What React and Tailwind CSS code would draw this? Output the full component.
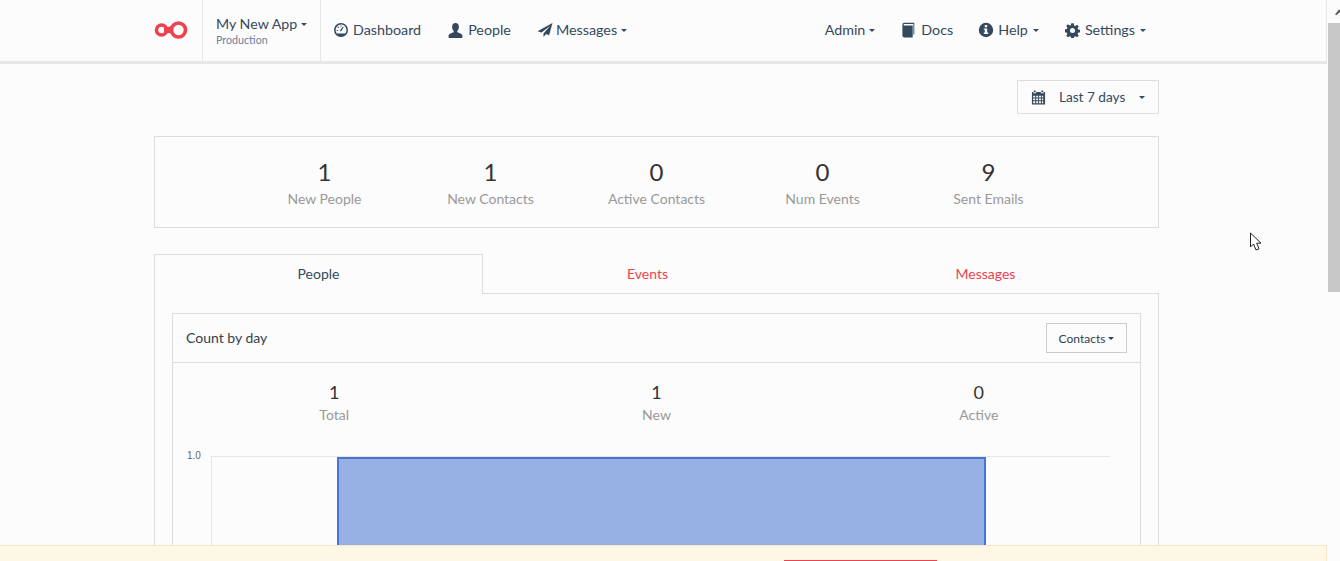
import React from "react";

const Caret = ({ className = "" }) => (
  <span className={"inline-block w-0 h-0 border-x-[3px] border-x-transparent border-t-[3px] border-t-current align-middle " + className} />
);

const I = ({ children, w = 16, vb = "0 0 16 16", className = "" }) => (
  <svg width={w} height={w} viewBox={vb} className={"shrink-0 " + className} fill="currentColor">{children}</svg>
);

const Gauge = () => (
  <I w={16}>
    <path fillRule="evenodd" d="M8 1a7 7 0 1 1 0 14A7 7 0 0 1 8 1zm0 1.600a5.400 5.400 0 0 0-5.400 5.400c0 1.300.5 2.500 1.200 3.400h8.400A5.400 5.400 0 0 0 8 2.600z" />
    <path d="M7 8.200 10 4.600l.7.500-2.300 3.900a1 1 0 0 1-1.400-.8zM7.500 3.500h1v1.200h-1zM4.400 5.400l.8-.8.8.8-.8.8zM3.600 8h1.300v1H3.600z" />
  </I>
);
const User = () => (
  <I w={17}>
    <path d="M8 1c2 0 3.200 1.500 3.200 3.600 0 1.500-.7 3-1.500 3.800v1.200c1.800.7 4.800 1.400 4.800 3.200V15h-13v-2.200c0-1.800 3-2.500 4.800-3.200V8.400c-.8-.8-1.500-2.300-1.500-3.800C4.800 2.500 6 1 8 1z" />
  </I>
);
const Send = () => (
  <I w={16}>
    <path d="M15.500 1 .5 9.300l4 1.300L13 4l-6.500 7.400V15l2.600-3 3 1.200z" />
  </I>
);
const Book = () => (
  <I w={16}>
    <path d="M3.300.8h10v11.800h-.9V1.900H3.400a.8.800 0 0 0 0 1.600h8.300v12H3.300c-1.100 0-1.900-.8-1.900-1.900V2.700c0-1.100.8-1.900 1.900-1.900z" />
  </I>
);
const Info = () => (
  <I w={16}>
    <path fillRule="evenodd" d="M8 .8a7.200 7.200 0 1 1 0 14.400A7.200 7.200 0 0 1 8 .8zM6.800 3v2.200h2.400V3zM5.800 6.400v1.400h1v2.600h-1v1.500h4.400v-1.500h-1V6.400z" />
  </I>
);
const Cog = () => (
  <I w={15}>
    <path fillRule="evenodd" d="M6.700.3h2.600l.4 2.300 1.300.6 1.900-1.300 1.800 1.800-1.300 1.900.6 1.300 2.300.4v2.600l-2.300.4-.6 1.300 1.300 1.900-1.800 1.800-1.900-1.300-1.300.6-.4 2.300H6.700l-.4-2.300-1.300-.6-1.900 1.300-1.800-1.800 1.300-1.900-.6-1.300-2.300-.4V6.700l2.300-.4.6-1.300-1.300-1.900 1.800-1.800 1.900 1.300 1.300-.6zM8 5.300a2.700 2.700 0 1 0 0 5.400 2.700 2.700 0 0 0 0-5.400z" />
  </I>
);
const Calendar = () => (
  <I w={15}>
    <path fillRule="evenodd" d="M3 .5h2v2H3zM11 .5h2v2h-2zM1 2h1.500v1.500h3V2h5v1.500h3V2H15v13.500H1zM2.300 6v2h2.200V6zm3.300 0v2h2V6zm3 0v2h2V6zm3 0v2h1.400V6zM2.300 9v2h2.200V9zm3.300 0v2h2V9zm3 0v2h2V9zm3 0v2h1.400V9zM2.300 12v2h2.200v-2zm3.300 0v2h2v-2zm3 0v2h2v-2zm3 0v2h1.400v-2z" />
  </I>
);
const Logo = () => (
  <svg width="34" height="20" viewBox="0 0 34 20" fill="none" stroke="#f0414f" strokeWidth="3.600">
    <circle cx="7.500" cy="10" r="5" />
    <circle cx="24.500" cy="10" r="7" />
    <path d="M10 5.800 Q14 8 18 5.800 L18 14.200 Q14 12 10 14.200z" fill="#f0414f" stroke="none" />
  </svg>
);

const NavItem = ({ icon, label, caret, caretClass = "ml-[4px]", className = "" }) => (
  <div className={"flex items-center text-[14.3px] text-[#34495e] " + className}>
    {icon}
    <span>{label}</span>
    {caret && <Caret className={caretClass} />}
  </div>
);

const Stat = ({ value, label, className = "" }) => (
  <div className={"flex flex-col items-center " + className}>
    <div className="text-[24px] leading-[26px] text-[#333333]">{value}</div>
    <div className="mt-[1px] text-[14px] leading-[26px] text-[#999999]">{label}</div>
  </div>
);

const SmallStat = ({ value, label }) => (
  <div className="flex-1 flex flex-col items-center">
    <div className="text-[18px] leading-[20px] text-[#333333]">{value}</div>
    <div className="mt-[3px] text-[14px] leading-[20px] text-[#999999]">{label}</div>
  </div>
);

export default function App() {
  return (
    <div className="relative h-[561px] w-[1340px] overflow-hidden bg-[#fcfcfc] font-['Lato','Open_Sans',sans-serif]">
      {/* scrollbar */}
      <div className="absolute right-0 top-0 z-10 h-[561px] w-[12px] bg-[#fcfcfc]">
        <svg width="12" height="12" viewBox="0 0 12 12" className="mt-[5px]"><path d="M7 9.500 11 4.500 13 6 8.500 10z" fill="#555" /></svg>
        <div className="absolute left-0 top-[23px] h-[269px] w-[12px] bg-[#c8c8c8]" />
      </div>

      {/* navbar */}
      <header className="flex h-[64px] w-[1327px] border-b-[3px] border-r border-[#e7e7e7] pl-[154px]">
        <div className="flex w-[48px] items-center pb-[1px]"><Logo /></div>
        <div className="flex w-[119px] flex-col border-x border-[#e7e7e7] pl-[13px] pt-[15px]">
          <div className="flex items-center text-[14.2px] leading-[18px] text-[#34495e]">My New App<Caret className="ml-[4px]" /></div>
          <div className="text-[10.7px] leading-[14px] text-[#6b8299]">Production</div>
        </div>
        <nav className="ml-[12px] flex items-center gap-[26px] pb-[1px]">
          <NavItem icon={<span className="mr-[4px]"><Gauge /></span>} label="Dashboard" />
          <NavItem icon={<span className="mr-[4px]"><User /></span>} label="People" />
          <NavItem icon={<span className="mr-[3px]"><Send /></span>} label="Messages" caret />
        </nav>
        <nav className="ml-auto mr-[180px] flex items-center gap-[26px] pb-[1px]">
          <NavItem label="Admin" caret />
          <NavItem className="-mr-px" icon={<span className="mr-[4px]"><Book /></span>} label="Docs" />
          <NavItem icon={<span className="mr-[4px]"><Info /></span>} label="Help" caret caretClass="ml-[5px]" />
          <NavItem icon={<span className="mr-[5px]"><Cog /></span>} label="Settings" caret caretClass="ml-[5px]" />
        </nav>
      </header>

      <main className="ml-[154px] w-[1005px]">
        <div className="mt-[16px] flex justify-end">
          <div className="flex h-[34px] w-[142px] items-center border border-[#dddddd] pl-[13px] text-[13.6px] text-[#34495e]">
            <span className="mr-[13px]"><Calendar /></span>
            Last 7 days
            <Caret className="ml-[14px]" />
          </div>
        </div>

        <section className="relative mt-[22px] h-[92px] border border-[#dddddd]">
          <div className="grid h-full grid-cols-[repeat(5,166px)] pl-[86.5px] pt-[22px]">
            <Stat value="1" label="New People" />
            <Stat value="1" label="New Contacts" />
            <Stat value="0" label="Active Contacts" />
            <Stat value="0" label="Num Events" />
            <Stat value="9" label="Sent Emails" />
          </div>
        </section>

        {/* tabs */}
        <div className="mt-[26px] flex h-[40px] text-[14px]">
          <div className="flex w-[329px] items-center justify-center border-x border-t border-[#dddddd] pb-[2px] text-[#34495e]">People</div>
          <div className="flex w-[329px] items-center justify-center border-b border-[#dddddd] text-[#f0414f]">Events</div>
          <div className="flex flex-1 items-center justify-center border-b border-[#dddddd] text-[#f0414f]">Messages</div>
        </div>

        <div className="h-[300px] border-x border-[#dddddd] px-[17px] pt-[19px]">
          <div className="h-[300px] border border-[#dddddd]">
            <div className="flex h-[49px] items-center justify-between border-b border-[#dddddd] pl-[13px] pr-[13px]">
              <span className="pb-[2px] text-[14px] text-[#333f4d]">Count by day</span>
              <div className="flex h-[30px] w-[81px] items-center justify-center border border-[#cccccc] pt-[1px] text-[12px] text-[#333f4d]">
                Contacts<Caret className="ml-[3px]" />
              </div>
            </div>
            <div className="flex pt-[19px]">
              <SmallStat value="1" label="Total" />
              <SmallStat value="1" label="New" />
              <SmallStat value="0" label="Active" />
            </div>
            {/* chart */}
            <div className="relative mt-[31px] flex h-[120px] pl-[38px]">
              <div className="relative flex h-[120px] w-[899px] border-l border-t border-[#e6e6e6]">
                <span className="absolute left-[-25px] top-[-7px] font-['Liberation_Sans',sans-serif] text-[10px] leading-[12px] text-[#666666]">1.0</span>
                <div className="ml-[125px] h-full w-[649px] border-2 border-b-0 border-[#4a74d3] bg-[#98b1e4]" />
              </div>
            </div>
          </div>
        </div>
      </main>

      {/* notice bar */}
      <div className="absolute bottom-0 left-0 h-[16px] w-[1327px] border-r border-t border-[#f5e6cc] bg-[#fff7e5]">
        <div className="absolute left-[784px] top-[14px] h-[2px] w-[153px] bg-[#f0414f]" />
      </div>

      {/* mouse cursor */}
      <svg width="14" height="20" viewBox="0 0 14 20" className="absolute left-[1249px] top-[232px]">
        <path d="M1.500 1v14l3-3 2.500 6 3-1.200-2.300-5.600h4.300z" fill="#fff" stroke="#222" strokeWidth="1" />
      </svg>
    </div>
  );
}
